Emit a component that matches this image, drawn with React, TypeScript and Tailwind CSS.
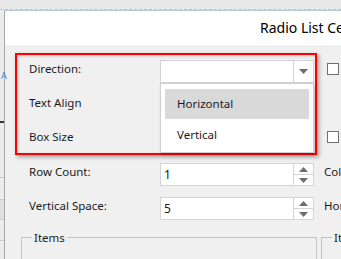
const font = { fontFamily: '"Noto Sans", "Open Sans", sans-serif' }

function Down() {
  return (
    <svg width="9" height="5" viewBox="0 0 9 5">
      <path d="M0 0h9L4.5 5z" fill="#6d6d6d" />
    </svg>
  )
}

function Up() {
  return (
    <svg width="9" height="5" viewBox="0 0 9 5">
      <path d="M0 5h9L4.5 0z" fill="#6d6d6d" />
    </svg>
  )
}

function Spin({ value }: { value: string }) {
  return (
    <div className="flex h-[23px] w-[154px] shrink-0 border border-[#d4d4d4] bg-white">
      <span className="flex-1 pl-[3px] text-[12px] leading-[21px] text-[#1a1a1a]">{value}</span>
      <div className="flex w-[20px] flex-col border-l border-[#d4d4d4]">
        <div className="flex flex-1 items-center justify-center border-b border-[#d4d4d4]">
          <Up />
        </div>
        <div className="flex flex-1 items-center justify-center">
          <Down />
        </div>
      </div>
    </div>
  )
}

function Check() {
  return <div className="mt-[3px] ml-[13px] size-[12px] shrink-0 border border-[#6f6f6f] bg-white" />
}

export default function App() {
  const label = 'w-[155px] shrink-0 pl-[24px] pt-[1px] text-[11.5px] leading-4 text-[#1a1a1a]'
  const side = 'ml-[10px] shrink-0 pt-[1px] text-[11.5px] leading-4 whitespace-nowrap text-[#1a1a1a]'

  return (
    <div className="relative h-[259px] w-[341px] overflow-hidden bg-[#e8e8e8]" style={font}>
      <div className="h-[10px] border-b border-dashed border-[#b8c4d0]" />
      <div className="flex h-[249px]">
        {/* background app strip */}
        <div className="relative w-[5px] shrink-0 border-r border-[#a8a8a8] bg-[#ececec]">
          <div className="absolute top-[60px] left-[1px] text-[9px] leading-3 text-[#3a7bd5]">A</div>
          <div className="absolute top-[111px] h-[2px] w-full bg-[#333]" />
          <div className="absolute top-[167px] h-px w-full bg-[#c8c8c8]" />
          <div className="absolute top-[189px] h-[21px] w-full border-y border-[#c8c8c8] bg-[#e0e0e0]" />
          <div className="absolute top-[230px] h-px w-full bg-[#c8c8c8]" />
        </div>

        {/* dialog */}
        <div className="flex min-w-0 flex-1 flex-col overflow-hidden border-t border-[#b8c8d8]">
          <div className="h-[34px] shrink-0 bg-white pl-[255px] text-[14px] leading-[34px] whitespace-nowrap text-black">
            Radio List Ce
          </div>
          <div className="flex flex-1 flex-col bg-[#f0f0f0] pt-[15px]">
            <div className="flex h-[34px] items-start">
              <span className={label}>Direction:</span>
              <div className="flex h-[23px] w-[154px] shrink-0 border border-[#d4d4d4] bg-white">
                <span className="flex-1" />
                <div className="flex w-[20px] items-center justify-center border-l border-[#d4d4d4]">
                  <Down />
                </div>
              </div>
              <Check />
            </div>
            <div className="flex h-[34px] items-start">
              <span className={label}>Text Align</span>
            </div>
            <div className="flex h-[35px] items-start">
              <span className={label}>Box Size</span>
              <div className="w-[154px] shrink-0" />
              <Check />
            </div>
            <div className="flex h-[34px] items-start">
              <span className={label}>Row Count:</span>
              <Spin value="1" />
              <span className={side}>Col</span>
            </div>
            <div className="flex h-[34px] items-start">
              <span className={label}>Vertical Space:</span>
              <Spin value="5" />
              <span className={side}>Hor</span>
            </div>
            <div className="mt-[6px] flex gap-[4px] pl-[16px]">
              <div className="relative h-[40px] w-[296px] shrink-0 border-x border-t border-[#c4c4c4]">
                <span className="absolute -top-[8px] left-[10px] bg-[#f0f0f0] px-[2px] text-[11.5px] leading-4 text-[#1a1a1a]">Items</span>
              </div>
              <div className="relative h-[40px] w-[40px] shrink-0 border-t border-l border-[#c4c4c4]">
                <span className="absolute -top-[8px] left-[10px] bg-[#f0f0f0] px-[2px] text-[11.5px] leading-4 whitespace-nowrap text-[#1a1a1a]">It</span>
              </div>
            </div>
          </div>
        </div>
      </div>

      {/* annotation + open dropdown */}
      <div className="absolute top-[53px] left-[15px] h-[102px] w-[302px] border-2 border-[#ff0000] shadow-[2px_2px_4px_rgba(0,0,0,0.35),inset_1px_1px_3px_rgba(0,0,0,0.2)]" />
      <div className="absolute top-[83px] left-[160px] h-[70px] w-[154px] border border-[#cfcfcf] bg-white px-[4px] pt-[5px] shadow-[1px_2px_3px_rgba(0,0,0,0.2)]">
        <div className="h-[30px] bg-[#d9d9d9] pl-[12px] text-[11.5px] leading-[30px] text-[#1a1a1a]">Horizontal</div>
        <div className="h-[32px] pl-[12px] text-[11.5px] leading-[32px] text-[#1a1a1a]">Vertical</div>
      </div>
    </div>
  )
}
